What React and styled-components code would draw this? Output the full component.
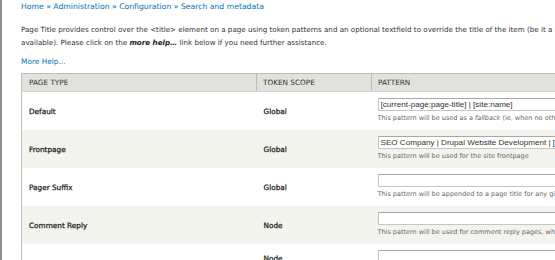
import React from 'react';
import styled, { createGlobalStyle } from 'styled-components';

const GlobalStyle = createGlobalStyle`
  html, body {
    margin: 0;
    padding: 0;
    overflow: hidden;
    background: #ffffff;
  }
  body {
    font-family: "DejaVu Sans", Verdana, sans-serif;
    color: #333;
  }
`;

const Page = styled.div`
  border-left: 2px solid #8e8e8e;
  padding-left: 19px;
  min-height: 260px;
  overflow: hidden;
`;

const Breadcrumb = styled.div`
  font-size: 7.7px;
  line-height: 14px;
  color: #0074bd;
  white-space: nowrap;
`;

const Crumb = styled.a`
  color: #0074bd;
  text-decoration: none;
`;

const Intro = styled.p`
  margin: 9px 0 0;
  font-size: 7.15px;
  line-height: 13px;
  white-space: nowrap;
  color: #333;

  em {
    font-weight: bold;
    font-style: italic;
    color: #222;
  }
`;

const HelpLink = styled.a`
  display: block;
  margin-top: 5.5px;
  font-size: 7.4px;
  line-height: 13px;
  color: #0074bd;
  text-decoration: none;
`;

const Table = styled.table`
  margin-top: 5.5px;
  width: 720px;
  border-collapse: collapse;
  table-layout: fixed;
  border-left: 1px solid #bebfb9;
`;

const HeadCell = styled.th`
  height: 17px;
  padding: 0 6px 0 ${(p) => p.$pad || 7}px;
  background: #e1e2dc;
  border: 1px solid #bebfb9;
  border-bottom-color: #d0d1cb;
  font-size: 7.3px;
  font-weight: normal;
  text-align: left;
  text-transform: uppercase;
  color: #333;
`;

const Row = styled.tr`
  background: ${(p) => (p.$even ? '#f3f4ee' : '#ffffff')};
`;

const Cell = styled.td`
  padding: 0 7px ${(p) => (p.$raised ? 10 : 0)}px;
  font-size: 7.3px;
  font-weight: normal;
  -webkit-text-stroke: 0.25px #222;
  vertical-align: middle;
  color: #222;
`;

const PatternCell = styled.td`
  padding: 6px 6px 6px;
  vertical-align: top;
`;

const PatternInput = styled.input`
  display: block;
  box-sizing: border-box;
  width: 330px;
  height: 13px;
  margin: 0;
  padding: 0 2px;
  border: 1px solid #c5c5c5;
  border-top-color: #a8a8a8;
  background: #fff;
  font-family: "Liberation Sans", Arial, sans-serif;
  font-size: 8.1px;
  color: #333;
  outline: none;
`;

const Hint = styled.div`
  margin-top: 1px;
  font-size: 6.5px;
  line-height: 12px;
  color: #666;
  white-space: nowrap;
`;

const rows = [
  {
    type: 'Default',
    scope: 'Global',
    value: '[current-page:page-title] | [site:name]',
    hint: (
      <>
        This pattern will be used as a <em>fallback</em> (ie, when no other pattern is defined)
      </>
    ),
  },
  {
    type: 'Frontpage',
    scope: 'Global',
    value: 'SEO Company | Drupal Website Development | [site:name]',
    hint: 'This pattern will be used for the site frontpage',
  },
  {
    type: 'Pager Suffix',
    scope: 'Global',
    value: '',
    hint: 'This pattern will be appended to a page title for any given page with a pager on it',
  },
  {
    type: 'Comment Reply',
    scope: 'Node',
    value: '',
    hint: 'This pattern will be used for comment reply pages, where the reply form is on its own page',
  },
  {
    type: 'Content Type - Article',
    scope: 'Node',
    value: '',
    hint: 'This pattern will be used for Article content',
    raised: true,
  },
];

export default function App() {
  return (
    <>
      <GlobalStyle />
      <Page>
        <Breadcrumb>
          <Crumb href="#">Home</Crumb> » <Crumb href="#">Administration</Crumb> »{' '}
          <Crumb href="#">Configuration</Crumb> » <Crumb href="#">Search and metadata</Crumb>
        </Breadcrumb>
        <Intro>
          Page Title provides control over the &lt;title&gt; element on a page using token patterns and an
          optional textfield to override the title of the item (be it a node, term, user or other entity where
          <br />
          available). Please click on the <em>more help…</em> link below if you need further assistance.
        </Intro>
        <HelpLink href="#">More Help...</HelpLink>
        <Table>
          <colgroup>
            <col style={{ width: 235 }} />
            <col style={{ width: 115 }} />
            <col />
          </colgroup>
          <thead>
            <tr>
              <HeadCell>Page Type</HeadCell>
              <HeadCell $pad={6}>Token Scope</HeadCell>
              <HeadCell $pad={6}>Pattern</HeadCell>
            </tr>
          </thead>
          <tbody>
            {rows.map((row, i) => (
              <Row key={row.type} $even={i % 2 === 1}>
                <Cell>{row.type}</Cell>
                <Cell $raised={row.raised}>{row.scope}</Cell>
                <PatternCell>
                  <PatternInput type="text" defaultValue={row.value} />
                  <Hint>{row.hint}</Hint>
                </PatternCell>
              </Row>
            ))}
          </tbody>
        </Table>
      </Page>
    </>
  );
}
